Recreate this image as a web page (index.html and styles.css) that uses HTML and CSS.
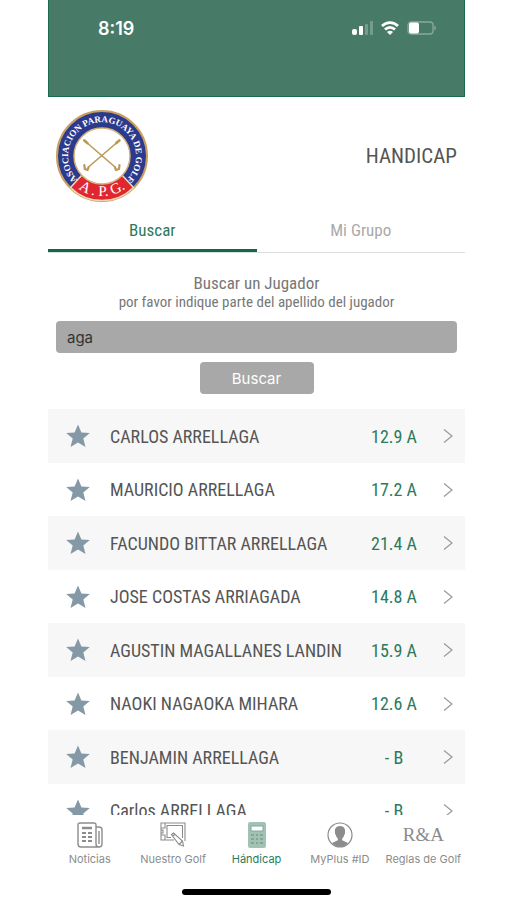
FILE: index.html
```html
<!DOCTYPE html>
<html lang="es">
<head>
  <meta charset="UTF-8">
  <meta name="viewport" content="width=device-width, initial-scale=1.0">
  <title>Handicap</title>
  <link rel="stylesheet" href="styles.css">
</head>
<body>

  <!-- Shared shapes -->
  <svg class="sprite" aria-hidden="true">
    <symbol id="star" viewBox="0 0 24 24">
      <path d="M12 0.5l3.400 7.900 8.400.6-6.500 5.500 2.200 8.500L12 18.500 4.500 23l2.200-8.500L.2 9l8.400-.6z"/>
    </symbol>
    <symbol id="chevron" viewBox="0 0 10 16">
      <path d="M1 1.500L9 8l-8 6.500" fill="none" stroke="currentColor" stroke-width="1.200"/>
    </symbol>
  </svg>

  <div class="app">
    <header class="status-bar">
      <span class="time">8:19</span>
      <div class="status-icons">
        <svg width="21" height="14" viewBox="0 0 21 14" fill="#fff">
          <rect x="0" y="8" width="5" height="6" rx="2"/>
          <rect x="7" y="5" width="4" height="9" rx="1"/>
          <rect x="13" y="3" width="3" height="11" rx="1" opacity=".25"/>
          <rect x="18" y="0" width="3" height="14" rx="1" opacity=".25"/>
        </svg>
        <svg width="18" height="14" viewBox="0 0 18 14" fill="none" stroke="#fff" stroke-width="2.800">
          <path d="M1 5C5.600.4 12.400.4 17 5"/>
          <path d="M4 8.600C7 5.700 11 5.700 14 8.600"/>
          <path d="M9 14L6 10.900C8 9.300 10 9.300 12 10.900z" fill="#fff" stroke="none"/>
        </svg>
        <svg width="29" height="14" viewBox="0 0 29 14">
          <rect x="1" y="1" width="25" height="12" rx="3" fill="none" stroke="#fff" stroke-opacity=".35" stroke-width="1.300"/>
          <rect x="2" y="1.500" width="10" height="11" rx="2" fill="#fff"/>
          <path d="M27.500 4.500c1.500.8 1.500 4.200 0 5z" fill="#fff" opacity=".5"/>
        </svg>
      </div>
    </header>

    <div class="brand">
      <svg class="logo" viewBox="0 0 92 92" role="img" aria-label="Asociación Paraguaya de Golf">
        <defs>
          <path id="arc-top" d="M24.100 72.100A34 34 0 1 1 67.900 72.100"/>
          <path id="arc-bottom" d="M16 72.500A40 40 0 0 0 76 72.500"/>
        </defs>
        <circle cx="46" cy="46" r="45" fill="#2b3a8c" stroke="#c9a063" stroke-width="2"/>
        <path d="M26 65L14.500 77.500A44.500 44.500 0 0 0 77.500 77.500L66 65A28 28 0 0 1 26 65z" fill="#e02730" stroke="#ecd9b8" stroke-width="1.500"/>
        <circle cx="46" cy="46" r="28" fill="#fff" stroke="#d4b27a" stroke-width="1.500"/>
        <text class="logo-name"><textPath href="#arc-top" startOffset="50%">ASOCIACION PARAGUAYA DE GOLF</textPath></text>
        <text class="logo-initials"><textPath href="#arc-bottom" startOffset="50%">A . P. G.</textPath></text>
        <g fill="none" stroke="#b99b55" stroke-width="1.600" stroke-linecap="round">
          <path d="M28.300 30.500L59 57"/>
          <path d="M63.300 30.500L32.500 57"/>
          <path d="M59 57.500l1 2.500 3-1 .5-4M32.500 57.500l-1 2.500-2.700-1-.5-4" stroke-width="2.200" stroke-linejoin="round"/>
          <path d="M28.300 30.500l3 2.500M63.300 30.500l-3 2.500" stroke-width="2.800"/>
        </g>
      </svg>
      <h1>HANDICAP</h1>
    </div>

    <nav class="tabs">
      <a href="#buscar" class="active">Buscar</a>
      <a href="#grupo">Mi Grupo</a>
    </nav>

    <form class="search" id="buscar">
      <label for="apellido">
        <span class="search-title">Buscar un Jugador</span>
        <span class="search-hint">por favor indique parte del apellido del jugador</span>
      </label>
      <input type="text" id="apellido" value="aga">
      <button type="button">Buscar</button>
    </form>

    <ul class="players">
      <li><a href="#"><svg class="star"><use href="#star"/></svg><span class="name">CARLOS ARRELLAGA</span><span class="score">12.9 A</span><svg class="chevron"><use href="#chevron"/></svg></a></li>
      <li><a href="#"><svg class="star"><use href="#star"/></svg><span class="name">MAURICIO ARRELLAGA</span><span class="score">17.2 A</span><svg class="chevron"><use href="#chevron"/></svg></a></li>
      <li><a href="#"><svg class="star"><use href="#star"/></svg><span class="name">FACUNDO BITTAR ARRELLAGA</span><span class="score">21.4 A</span><svg class="chevron"><use href="#chevron"/></svg></a></li>
      <li><a href="#"><svg class="star"><use href="#star"/></svg><span class="name">JOSE COSTAS ARRIAGADA</span><span class="score">14.8 A</span><svg class="chevron"><use href="#chevron"/></svg></a></li>
      <li><a href="#"><svg class="star"><use href="#star"/></svg><span class="name">AGUSTIN MAGALLANES LANDIN</span><span class="score">15.9 A</span><svg class="chevron"><use href="#chevron"/></svg></a></li>
      <li><a href="#"><svg class="star"><use href="#star"/></svg><span class="name">NAOKI NAGAOKA MIHARA</span><span class="score">12.6 A</span><svg class="chevron"><use href="#chevron"/></svg></a></li>
      <li><a href="#"><svg class="star"><use href="#star"/></svg><span class="name">BENJAMIN ARRELLAGA</span><span class="score">- B</span><svg class="chevron"><use href="#chevron"/></svg></a></li>
      <li><a href="#"><svg class="star"><use href="#star"/></svg><span class="name">Carlos ARRELLAGA</span><span class="score">- B</span><svg class="chevron"><use href="#chevron"/></svg></a></li>
    </ul>

    <nav class="tab-bar">
      <a href="#">
        <svg width="26" height="26" viewBox="0 0 26 26" fill="none" stroke="currentColor" stroke-width="1.400">
          <path d="M19 22V3q0-2-2-2H3Q1 1 1 3v19q0 3 3 3h18q3 0 3-3V8q0-3-3-3h-3M19 22q0 3 3 3M22 9v13"/>
          <path d="M5 6h10" stroke-width="2.500"/>
          <path d="M5 11h4M11 11h4M5 15h4M11 15h4M5 19h4M11 19h4" stroke-width="2"/>
        </svg>
        <span>Noticias</span>
      </a>
      <a href="#">
        <svg width="26" height="26" viewBox="0 0 26 26" fill="none" stroke="currentColor" stroke-width="1.100">
          <path d="M14 18H1V1h24v18M1 6h4V1M1 13h4v5M1 8h2v3H1"/>
          <path d="M11 15.500H7V3.500h15.500V16"/>
          <path d="M11.500 12.500l2-1.500 9 8 1 5-4.500-1.500z"/>
          <path d="M13 14l2-2M19 22.500l3.500-3.500"/>
        </svg>
        <span>Nuestro Golf</span>
      </a>
      <a href="#" class="active">
        <svg width="26" height="26" viewBox="0 0 26 26">
          <rect x="4" y="0" width="18" height="26" rx="2" fill="#a3c2b5"/>
          <rect x="7" y="4" width="12" height="5" fill="#fff" stroke="#7fa997"/>
          <path d="M7 13h3M12 13h2M16 13h3M7 17h3M12 17h2M16 17h3M7 21h3M12 21h2M16 21h3" stroke="#7fa997" stroke-width="2"/>
        </svg>
        <span>Hándicap</span>
      </a>
      <a href="#">
        <svg width="26" height="26" viewBox="0 0 26 26">
          <circle cx="13" cy="13" r="12" fill="none" stroke="currentColor" stroke-width="1.200"/>
          <path d="M13 4c-4 0-5.500 3-5 6-.2 1 0 2 .8 3 .3 1.500 1 2.500 2 3.300v2L5 21q3.500 4 8 4t8-4l-5.800-2.700v-2c1-.8 1.700-1.800 2-3.300.8-1 1-2 .8-3C18.500 7 17 4 13 4z" fill="currentColor"/>
        </svg>
        <span>MyPlus #ID</span>
      </a>
      <a href="#">
        <b class="ra">R&amp;A</b>
        <span>Reglas de Golf</span>
      </a>
    </nav>
    <div class="home-indicator"></div>
  </div>

</body>
</html>
```
FILE: styles.css
```css
* {
  box-sizing: border-box;
}

body {
  margin: 0;
  background-color: #fff;
  color: #555;
  font-family: "Liberation Sans Narrow", "Roboto Condensed", "Open Sans Condensed", Roboto, sans-serif;
}

a {
  color: inherit;
  text-decoration: none;
}

.sprite {
  display: none;
}

.app {
  display: flex;
  flex-direction: column;
  height: 100vh;
  margin: 0 41px 0 48px;
}

.status-bar {
  display: flex;
  justify-content: space-between;
  align-items: flex-start;
  height: 97px;
  padding: 18px 28px 0 49px;
  background-color: #477b68;
  border: 1px solid #1b6b4e;
  border-top: none;
  color: #fff;
}

.time {
  font: 600 18px/22px Inter, sans-serif;
}

.status-icons {
  display: flex;
  gap: 8px;
  padding-top: 3px;
}

.brand {
  display: flex;
  justify-content: space-between;
  align-items: center;
  padding: 13px 8px 8px;
}

.logo {
  width: 92px;
  height: 92px;
}

.logo-name,
.logo-initials {
  fill: #fff;
  font-family: "Liberation Serif", serif;
  text-anchor: middle;
}

.logo-name {
  font-size: 9px;
  font-weight: bold;
}

.logo-initials {
  font-size: 15px;
}

.brand h1 {
  margin: 0;
  font-size: 21px;
  font-weight: normal;
}

.tabs {
  display: flex;
  border-bottom: 1px solid #ddd;
}

.tabs a {
  flex: 1;
  padding: 10px 0 9px;
  border-bottom: 3px solid transparent;
  color: #aaa;
  font-size: 17px;
  line-height: 20px;
  text-align: center;
}

.tabs .active {
  border-color: #12694a;
  color: #2c7a5c;
}

.search {
  display: flex;
  flex-direction: column;
  align-items: center;
  padding: 20px 8px 15px;
}

.search label {
  margin-bottom: 10px;
  text-align: center;
}

.search-title,
.search-hint {
  display: block;
  color: #777;
}

.search-title {
  font-size: 17px;
  line-height: 20px;
}

.search-hint {
  font-size: 15px;
  line-height: 18px;
}

.search input,
.search button {
  height: 32px;
  border: none;
  border-radius: 4px;
  background-color: #a8a8a8;
  font-family: Inter, sans-serif;
}

.search input {
  width: 100%;
  padding: 0 11px;
  color: #333;
  font-size: 15px;
}

.search button {
  width: 114px;
  margin-top: 9px;
  color: #fff;
  font-size: 15px;
}

.players {
  flex: 1;
  min-height: 0;
  margin: 0;
  padding: 0;
  overflow: hidden;
  list-style: none;
}

.players a {
  display: flex;
  align-items: center;
  height: 53px;
  padding: 0 12px 0 18px;
}

.players li:nth-child(odd) a {
  height: 54px;
  background-color: #f7f7f7;
}

.star {
  width: 24px;
  height: 24px;
  margin-right: 20px;
  fill: #8499a5;
}

.name {
  flex: 1;
  font-size: 18px;
}

.score {
  width: 60px;
  margin-right: 19px;
  color: #2c7a5c;
  font-size: 18px;
  text-align: center;
}

.chevron {
  width: 10px;
  height: 16px;
  color: #999;
}

.tab-bar {
  display: flex;
  padding-top: 7px;
}

.tab-bar a {
  display: flex;
  flex: 1 0 0;
  flex-direction: column;
  align-items: center;
  min-width: 0;
  color: #8c8c8c;
  font: 11px/14px Inter, sans-serif;
  white-space: nowrap;
}

.tab-bar span {
  margin-top: 4px;
}

.tab-bar .active {
  color: #2c7a5c;
}

.ra {
  height: 26px;
  font: 19px/26px "Liberation Serif", serif;
}

.home-indicator {
  width: 149px;
  height: 6px;
  margin: 23px auto 5px;
  border-radius: 3px;
  background-color: #000;
}
```
